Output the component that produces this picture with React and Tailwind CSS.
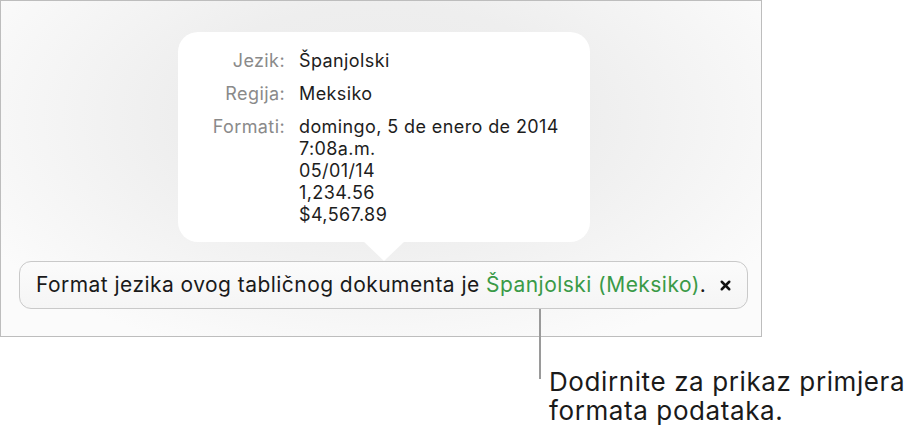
import { X } from 'lucide-react'

function Row({ label, children }) {
  return (
    <div className="flex items-start">
      <div className="w-[107px] shrink-0 text-right text-[#8a8a8a]">{label}</div>
      <div className="pl-[14px] text-[#1d1d1d]">{children}</div>
    </div>
  )
}

export default function App() {
  return (
    <div className="relative w-[918px] h-[439px] bg-white font-['Inter','Liberation_Sans',sans-serif] overflow-hidden">
      <div className="w-[762px] h-[337px] border border-[#bdbdbd] overflow-hidden bg-[radial-gradient(ellipse_60%_75%_at_50%_35%,#ebebeb_0%,#eeeeee_45%,#fbfbfb_100%)] flex flex-col">
        <div className="relative ml-[177px] mt-[31px] w-[412px] h-[210px] bg-white rounded-[20px] pt-[18px] text-[18px] leading-[22px] tracking-[0.4px] flex flex-col gap-[11px]">
          <Row label="Jezik:">Španjolski</Row>
          <Row label="Regija:">Meksiko</Row>
          <Row label="Formati:">
            <div>domingo, 5 de enero de 2014</div>
            <div>7:08a.m.</div>
            <div>05/01/14</div>
            <div>1,234.56</div>
            <div>$4,567.89</div>
          </Row>
          <div className="absolute left-[185px] top-[209px] w-0 h-0 border-l-[21px] border-r-[21px] border-t-[20px] border-l-transparent border-r-transparent border-t-white" />
        </div>
        <div className="ml-[18px] mt-[19px] w-[729px] h-[48px] rounded-[12px] border border-[#c9c9c9] bg-gradient-to-b from-[#fbfbfb] to-[#f5f5f5] flex items-center pl-[16px] text-[21px] tracking-[0.45px] text-[#1a1a1a]">
          <span>
            Format jezika ovog tabličnog dokumenta je{' '}
            <span className="text-[#3a9a47]">Španjolski (Meksiko)</span>.
          </span>
          <X className="ml-[12px] w-[15px] h-[15px] text-[#111]" strokeWidth={4} />
        </div>
      </div>
      <div className="absolute left-[539px] top-[309px] w-[2px] h-[70px] bg-[#9a9a9a]" />
      <div className="ml-[549px] mt-[30px] text-[26px] leading-[29px] tracking-[0.6px] text-[#1a1a1a]">
        Dodirnite za prikaz primjera
        <br />
        formata podataka.
      </div>
    </div>
  )
}
